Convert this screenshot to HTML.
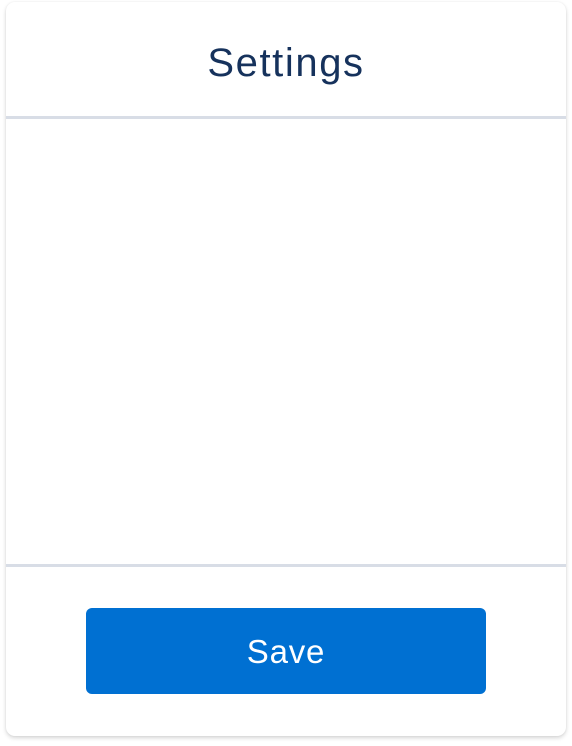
<!DOCTYPE html>
<html><head><style>
html,body{margin:0;padding:0;width:572px;height:746px;background:#fff;overflow:hidden}
.card{position:absolute;left:6px;top:2px;width:560px;height:734px;background:#fff;border-radius:9px;box-shadow:0 2px 4px rgba(0,0,0,0.16),0 0 2px rgba(0,0,0,0.06)}
.title{position:absolute;left:0;right:0;top:35px;text-align:center;font-family:"Liberation Sans",sans-serif;font-size:40px;font-weight:300;color:#16325c;line-height:52px;letter-spacing:1.6px}
.line{position:absolute;left:0;right:0;height:3px;background:#d8dde6}
.btn{position:absolute;left:80px;top:606px;width:400px;height:86px;background:#0070d2;border-radius:6px;color:#fff;font-family:"Liberation Sans",sans-serif;font-size:33px;text-align:center;line-height:88px;letter-spacing:0.8px}
</style></head><body>
<div class="card">
<div class="title">Settings</div>
<div class="line" style="top:114px"></div>
<div class="line" style="top:562px"></div>
<div class="btn">Save</div>
</div>
</body></html>
